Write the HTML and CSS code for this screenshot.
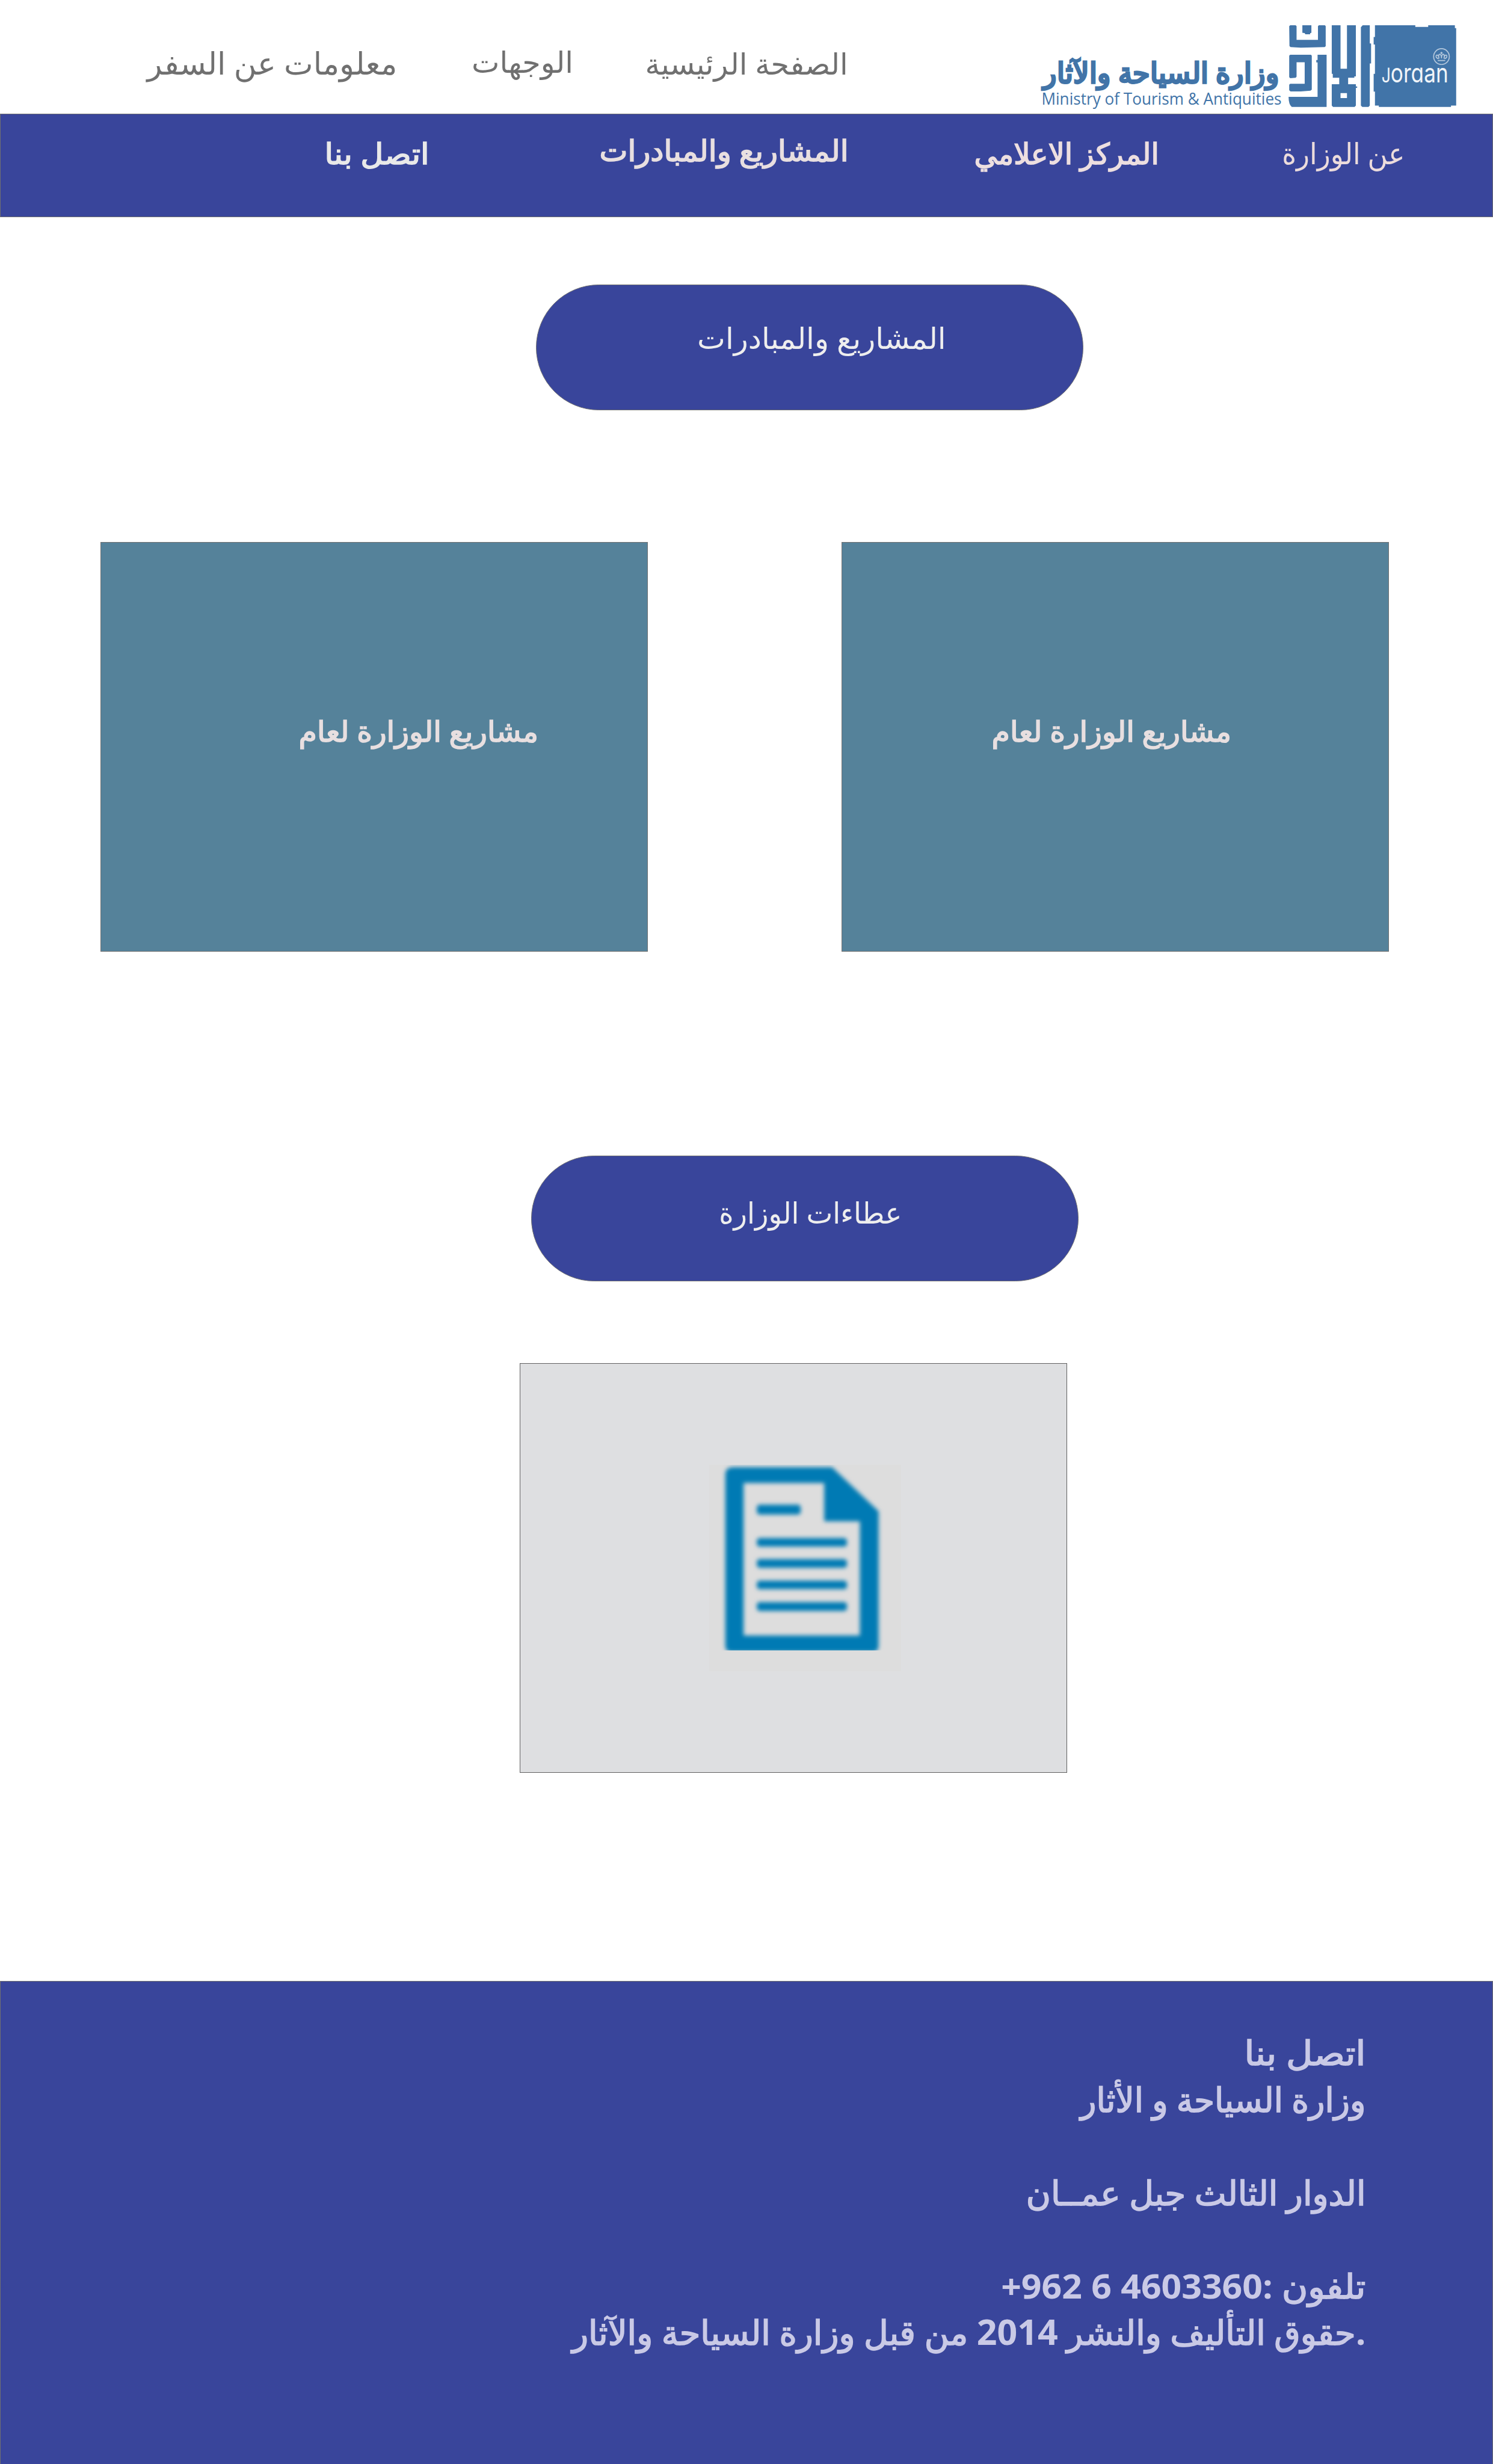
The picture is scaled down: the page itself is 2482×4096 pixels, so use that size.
FILE: index.html
```html
<!DOCTYPE html>
<html lang="ar">
<head>
<meta charset="utf-8">
<title>وزارة السياحة والآثار</title>
<link rel="stylesheet" href="styles.css">
</head>
<body>
<header class="top">
  <nav class="top-nav">
    <a class="label nav-travel">معلومات عن السفر</a>
    <a class="label nav-places">الوجهات</a>
    <a class="label nav-home">الصفحة الرئيسية</a>
  </nav>
  <svg class="logo" viewBox="2640 0 1200 292" preserveAspectRatio="none">
    <g class="logo-ar" transform="translate(2684 213) scale(.985 1)"><text x="0" y="0">وزارة السياحة والآثار</text></g>
    <g class="logo-en" transform="translate(2679.500 269) scale(.963 1)"><text x="0" y="0">Ministry of Tourism &amp; Antiquities</text></g>
    <g transform="translate(3280 40) scale(.3316 .3333)">
      <defs><clipPath id="word"><rect x="780" y="402" width="620" height="130"/></clipPath></defs>
      <g class="logo-mark">
        <path d="M118 75H160L167 82V188H333V82L340 75H387L393 82V236L385 243L200 248L120 243L112 235L110 82Z"/>
        <path d="M212 75H282V133L272 136V145H235L230 135L212 133Z"/>
        <path d="M118 303H278L285 310V572L275 580L200 586H120L110 576V534L118 526H230V360H167V472L160 480L118 484L110 476V310Z"/>
        <path d="M330 303H400V705H130Q106 690 105 628H330V362H320V343H330Z"/>
        <path fill-rule="evenodd" d="M440 75H508V410H558V75H627V470H615V480H567V530H627V548H637V558H627V695L617 705H450L440 695V530H498V480H448V450H440ZM508 598V637H558V598Z"/>
        <path d="M680 75H735V215H745V370H735V695L725 705H677L666 695V90Z"/>
        <path d="M775 75H1088V88H1188V75H1395V97H1405V695H1365V705H805V695H775V587H765V450H775V223H765V165H775Z"/>
      </g>
      <g class="logo-crown">
        <circle cx="1291" cy="317" r="61"/>
        <path d="M1262 347H1320M1268 334Q1240 322 1252 306Q1268 300 1272 332Q1264 300 1278 298Q1291 302 1291 330Q1291 302 1304 298Q1318 300 1310 332Q1314 300 1330 306Q1342 322 1314 334M1291 280V298M1283 288H1299"/>
      </g>
      <g clip-path="url(#word)"><text class="logo-jordan" x="826" y="518" textLength="518" lengthAdjust="spacingAndGlyphs"><tspan class="logo-j">J</tspan>ordan</text></g>
    </g>
  </svg>
</header>

<nav class="bar">
  <a class="label strong bar-contact">اتصل بنا</a>
  <a class="label strong bar-projects">المشاريع والمبادرات</a>
  <a class="label strong bar-media">المركز الاعلامي</a>
  <a class="label bar-about">عن الوزارة</a>
</nav>

<main>
  <h2 class="pill pill-projects"><span class="label">المشاريع والمبادرات</span></h2>
  <section class="cards">
    <article class="card"><span class="label strong card-left">مشاريع الوزارة لعام</span></article>
    <article class="card"><span class="label strong card-right">مشاريع الوزارة لعام</span></article>
  </section>
  <h2 class="pill pill-tenders"><span class="label">عطاءات الوزارة</span></h2>
  <article class="tender">
    <svg class="doc" viewBox="0 0 1382 1387" preserveAspectRatio="none">
      <defs>
        <filter id="soft" x="-5%" y="-5%" width="110%" height="110%"><feGaussianBlur stdDeviation="15"/></filter>
        <clipPath id="page"><rect width="1382" height="1247"/></clipPath>
      </defs>
      <rect class="doc-bg" width="1382" height="1387"/>
      <g clip-path="url(#page)">
        <g class="doc-ink" filter="url(#soft)">
          <path fill-rule="evenodd" d="M175 16H885L1220 312V1215Q1220 1260 1170 1260H170Q116 1260 116 1215V66Q116 16 175 16ZM248 122V1147H1085V380H828V122Z"/>
          <rect x="343" y="268" width="316" height="66" rx="20"/>
          <rect x="343" y="492" width="649" height="58" rx="20"/>
          <rect x="343" y="634" width="649" height="58" rx="20"/>
          <rect x="343" y="778" width="649" height="58" rx="20"/>
          <rect x="343" y="922" width="649" height="60" rx="20"/>
        </g>
      </g>
    </svg>
  </article>
</main>

<footer class="footer">
  <p class="line f-contact">اتصل بنا</p>
  <p class="line f-ministry">وزارة السياحة و الأثار</p>
  <p class="line f-address">الدوار الثالث جبل عمــان</p>
  <p class="line f-phone"><b>+962 6 4603360:</b> تلفون</p>
  <p class="line f-rights">حقوق التأليف والنشر <b>2014</b> من قبل وزارة السياحة والآثار<b>.</b></p>
</footer>
</body>
</html>
```
FILE: styles.css
```css
* { box-sizing: border-box; }

body {
  margin: 0;
  width: 2482px;
  height: 4096px;
  display: flex;
  flex-direction: column;
  overflow: hidden;
  background: #fff;
  font-family: "Open Sans", "DejaVu Sans", sans-serif;
}

/* Text labels: each box is as wide as its ink */
.label {
  display: block;
  flex: none;
  font-size: 49.3px;
  font-weight: 400;
  line-height: 80px;
  height: 80px;
  white-space: nowrap;
  transform-origin: 0 0;
  text-indent: -.06em;
}
.strong {
  font-size: 48.3px;
  text-indent: -.05em;
  -webkit-text-stroke: 1.7px currentColor;
}

/* Header */
.top { display: flex; height: 188.7px; flex: none; }
.top-nav { display: flex; color: #707070; }
.nav-travel { margin: 64px 0 0 242px; width: 414px; font-size: 51.6px; text-indent: .05em; }
.nav-places { margin: 62.4px 0 0 131px; width: 160px; }
.nav-home { margin: 64.9px 0 0 129px; width: 330px; text-indent: -.07em; }

.logo { margin-left: auto; width: 775.6px; height: 188.7px; flex: none; }
.logo-mark { fill: #4174a8; }
.logo-ar { font-family: "Open Sans"; font-size: 73px; font-weight: 700; fill: #4174a8; stroke: #4174a8; stroke-width: 3px; }
.logo-en { font-size: 42px; fill: #4174a8; }
.logo-crown { fill: none; stroke: #b3c7dc; stroke-width: 8px; }
.logo-jordan { font-family: Inter, sans-serif; font-size: 205px; fill: #f1f5f9; }
.logo-j { font-size: 155px; }

/* Main navigation */
.bar {
  display: flex;
  flex: none;
  height: 172px;
  background: #39459b;
  border: 1px solid #707070;
  color: #eddfe0;
}
.bar-contact { margin: 24.4px 0 0 541px; width: 166.5px; transform: scaleX(1.085); color: #e9e9e9; }
.bar-projects { margin: 19.2px 0 0 290.5px; width: 407.5px; transform: scaleX(1.032); color: #e8dfe0; }
.bar-media { margin: 24.4px 0 0 215px; width: 302px; transform: scaleX(.992); }
.bar-about { margin: 24px 0 0 210px; width: 198px; transform: scaleX(.923); color: #ecdcdc; }

/* Section headings */
main { flex: none; }
.pill {
  display: flex;
  width: 910px;
  height: 209.5px;
  margin: 0;
  border: 1px solid #707070;
  border-radius: 105px;
  background: #39459b;
  color: #eee;
}
.pill-projects { margin: 112.3px 0 0 890.7px; }
.pill-projects .label { margin: 47.3px 0 0 270.3px; transform: scaleX(1.01); }
.pill-tenders { margin: 338.7px 0 0 883px; }
.pill-tenders .label { margin: 53.5px 0 0 313.5px; transform: scaleX(.943); }

/* Project cards */
.cards { display: flex; gap: 321.8px; margin: 218.5px 0 0 166.8px; }
.card {
  display: flex;
  width: 910.1px;
  height: 681.3px;
  background: #55829a;
  border: 1px solid #707070;
  color: #e8dfe0;
}
.card .label { margin-top: 273.4px; font-size: 48px; transform: scaleX(1.022); }
.card .card-left { margin-left: 331.7px; }
.card .card-right { margin-left: 251.3px; }

/* Tender tile */
.tender {
  width: 910.3px;
  height: 681.3px;
  margin: 135.6px 0 0 863.5px;
  padding: 168.3px 0 0 314.5px;
  background: #dedfe1;
  border: 1px solid #606060;
}
.doc { display: block; width: 319px; height: 343.2px; }
.doc-bg { fill: #ddd; }
.doc-ink { fill: #007ab4; }

/* Footer */
.footer {
  margin-top: 345.2px;
  height: 803.5px;
  padding: 79.5px 210.5px 0 0;
  background: #39459b;
  border: 1px solid #707070;
  border-bottom: 0;
  color: #c9c9e6;
  flex: none;
}
.line {
  margin: 0;
  font-size: 56px;
  line-height: 77.56px;
  height: 77.56px;
  text-align: right;
  white-space: nowrap;
  transform-origin: 100% 0;
  -webkit-text-stroke: 1.7px currentColor;
}
.line b { font-weight: 700; -webkit-text-stroke: 0; }
.f-contact { transform: scaleX(1.085); }
.f-ministry { transform: scaleX(.978); margin-bottom: 77.56px; }
.f-address { transform: scaleX(1); margin-bottom: 77.56px; }
.f-phone { transform: scaleX(1.052); }
.f-rights { transform: scaleX(1); }
.f-rights b { font-size: 59px; line-height: 1; }
```
